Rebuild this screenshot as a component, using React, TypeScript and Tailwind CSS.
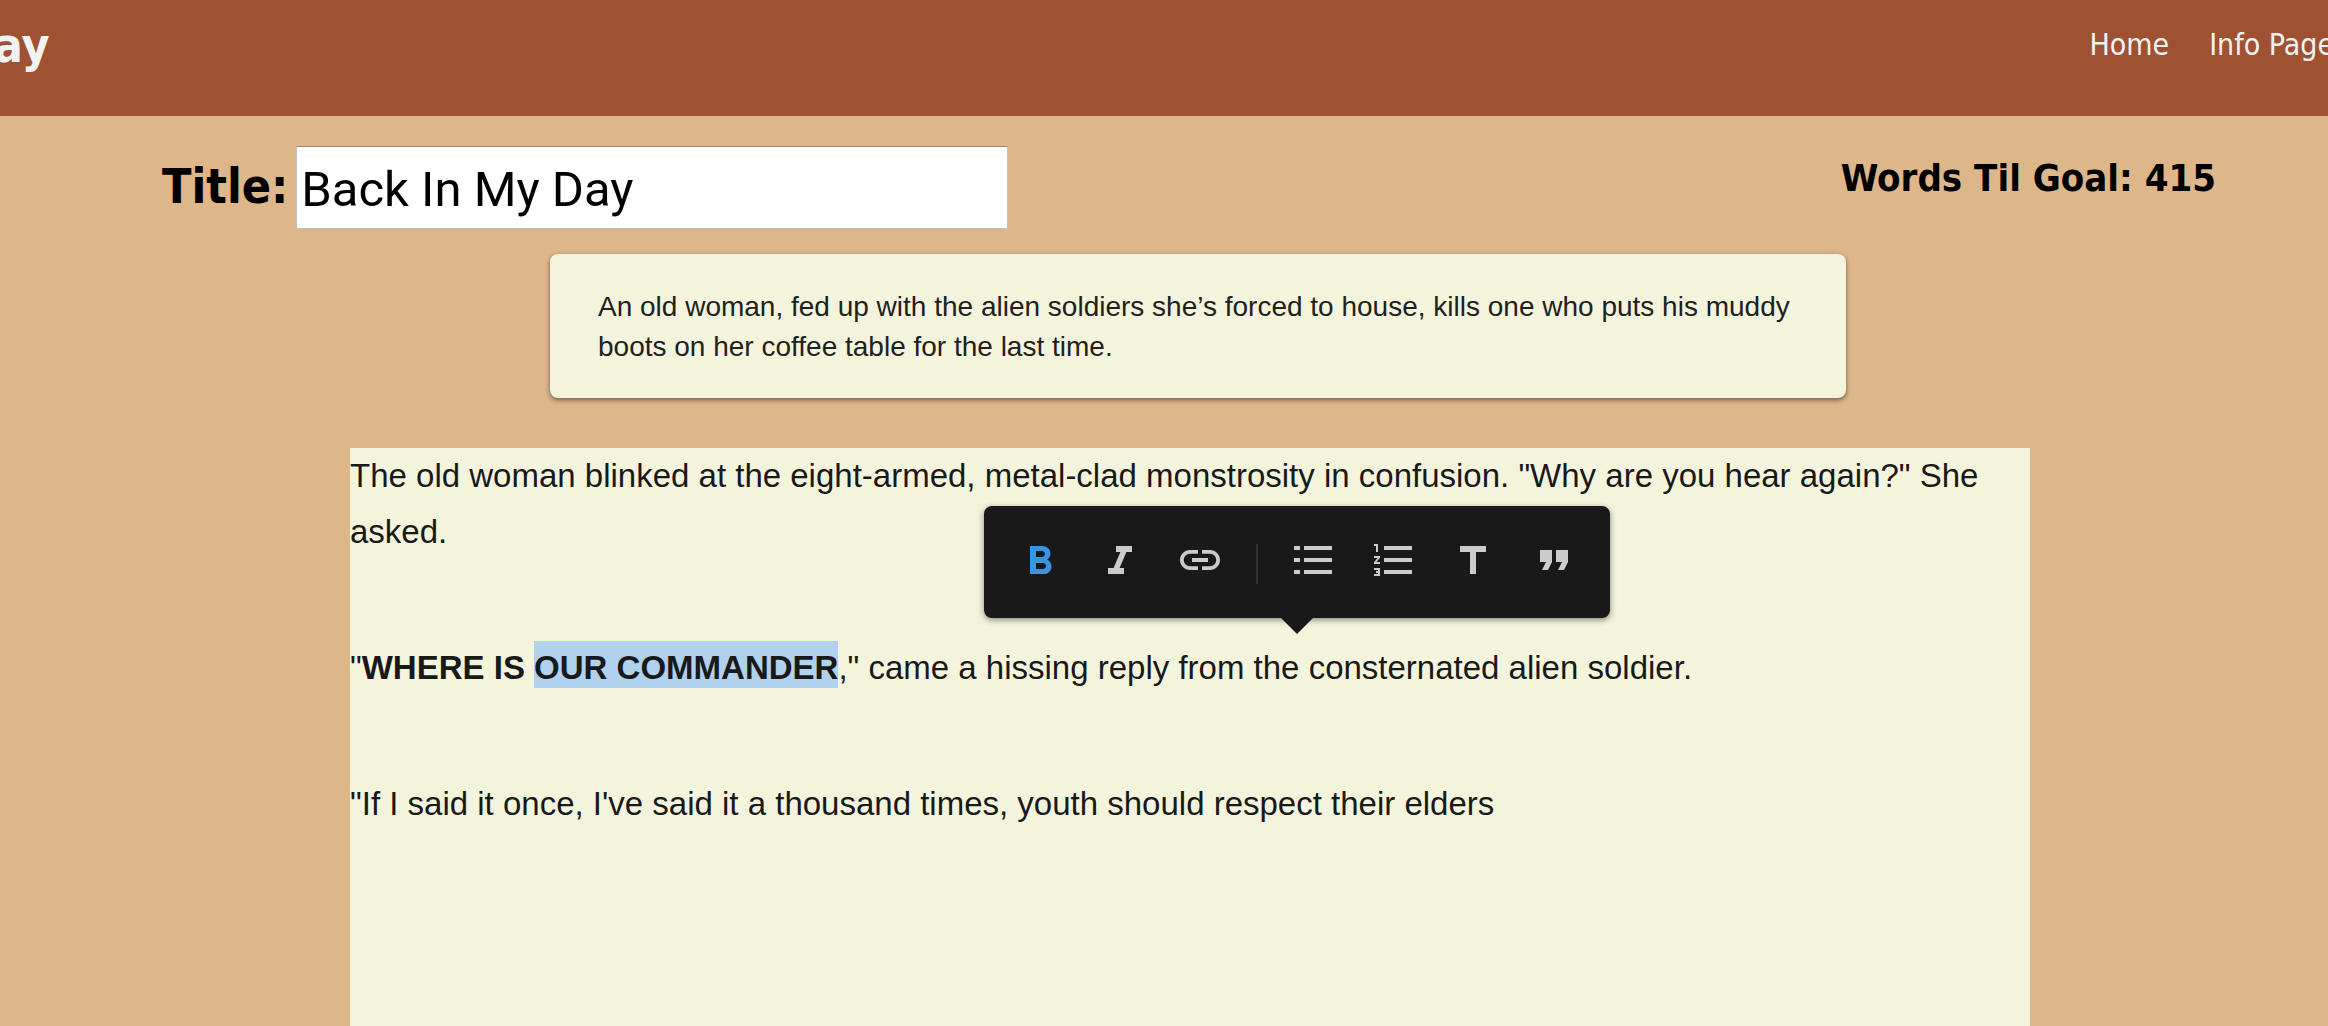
import { useState } from 'react';
import type { ReactNode } from 'react';

type Tool = { label: string; active?: boolean; icon: ReactNode };

const inlineTools: Tool[] = [
  {
    label: 'Bold',
    active: true,
    icon: (
      <path d="M15.6 11.79c.97-.67 1.65-1.77 1.65-2.79 0-2.26-1.75-4-4-4H7v14h7.04c2.09 0 3.71-1.7 3.71-3.79 0-1.52-.86-2.82-2.15-3.42zM10 7.5h3c.83 0 1.5.67 1.5 1.5s-.67 1.5-1.5 1.5h-3v-3zm3.5 9H10v-3h3.5c.83 0 1.5.67 1.5 1.5s-.67 1.5-1.5 1.5z" />
    ),
  },
  { label: 'Italic', icon: <path d="M10 5v3h2.21l-3.42 8H6v3h8v-3h-2.21l3.42-8H18V5z" /> },
  {
    label: 'Link',
    icon: (
      <path d="M3.9 12c0-1.71 1.39-3.1 3.1-3.1h4V7H7c-2.76 0-5 2.24-5 5s2.24 5 5 5h4v-1.9H7c-1.71 0-3.1-1.39-3.1-3.1zM8 13h8v-2H8v2zm9-6h-4v1.9h4c1.71 0 3.1 1.39 3.1 3.1s-1.39 3.1-3.1 3.1h-4V17h4c2.76 0 5-2.24 5-5s-2.24-5-5-5z" />
    ),
  },
];

const blockTools: Tool[] = [
  {
    label: 'Bulleted list',
    icon: <path d="M2 5h3v2H2zM2 11h3v2H2zM2 17h3v2H2zM7 5h14v2H7zM7 11h14v2H7zM7 17h14v2H7z" />,
  },
  {
    label: 'Numbered list',
    icon: (
      <path d="M2 17h2v.5H3v1h1v.5H2v1h3v-4H2v1zm1-9h1V4H2v1h1v3zm-1 3h1.8L2 13.1v.9h3v-1H3.2L5 10.9V10H2v1zm5-6v2h14V5H7zm0 14h14v-2H7v2zm0-6h14v-2H7v2z" />
    ),
  },
  { label: 'Heading', icon: <path d="M5 5v3h5v11h3V8h5V5z" /> },
  { label: 'Quote', icon: <path d="M6 17h3l2-4V7H5v6h3zm8 0h3l2-4V7h-6v6h3z" /> },
];

function ToolButton({ label, active, icon }: Tool) {
  return (
    <button
      type="button"
      aria-label={label}
      aria-pressed={!!active}
      className={active ? 'text-[#3895e6]' : 'text-[#cccccc]'}
    >
      <svg viewBox="0 0 24 24" fill="currentColor" className="size-12" aria-hidden="true">
        {icon}
      </svg>
    </button>
  );
}

function Toolbar() {
  return (
    <div
      role="toolbar"
      aria-label="Formatting"
      className="absolute left-[634px] top-[58px] flex items-end gap-8 rounded-lg bg-[#191919] px-8 pt-[30px] pb-[34px] shadow-[0_2px_6px_rgba(0,0,0,0.45)]"
    >
      {inlineTools.map((t) => (
        <ToolButton key={t.label} {...t} />
      ))}
      <div className="h-10 w-0.5 bg-[#333333]" />
      {blockTools.map((t) => (
        <ToolButton key={t.label} {...t} />
      ))}
      <div className="absolute left-1/2 top-full size-0 -translate-x-1/2 border-x-16 border-t-16 border-x-transparent border-t-[#191919]" />
    </div>
  );
}

export default function App() {
  const [title, setTitle] = useState('Back In My Day');
  return (
    <div className="flex min-h-screen flex-col overflow-hidden bg-[#ddb68a] font-['DejaVu_Sans_Condensed','Noto_Sans',sans-serif] text-black">
      <header className="flex h-29 items-start justify-between bg-[#9e5232] text-[#f2f2f2]">
        <a href="#" className="-ml-[42px] pt-3 text-5xl leading-[66px] font-bold">
          Day
        </a>
        <nav className="-mr-1.5 flex gap-10 pt-6 text-[30px] leading-[42px] whitespace-nowrap">
          <a href="#home">Home</a>
          <a href="#info">Info Page</a>
        </nav>
      </header>

      <div className="flex items-start justify-between pt-[30px] pr-28 pl-[162px]">
        <div className="flex items-start gap-2">
          <label htmlFor="title" className="pt-1 text-5xl leading-[72px] font-bold">
            Title:
          </label>
          <input
            id="title"
            value={title}
            onChange={(e) => setTitle(e.target.value)}
            className="h-[83px] w-[712px] border border-[#c0c0c0] border-t-[#a98963] bg-white px-1 pt-1 font-['Roboto',sans-serif] text-[49px] outline-none"
          />
        </div>
        <h3 className="pt-1.5 text-[38px] leading-[52px] font-bold">Words Til Goal: 415</h3>
      </div>

      <section className="mt-[25px] mr-[482px] ml-[550px] rounded-lg bg-[#f4f4dd] px-12 pt-[33px] pb-[31px] font-['Liberation_Sans',sans-serif] text-[28px] leading-10 text-[#212121] shadow-[0_2px_5px_rgba(0,0,0,0.5)]">
        <p>
          An old woman, fed up with the alien soldiers she’s forced to house, kills one who puts his muddy boots on her
          coffee table for the last time.
        </p>
      </section>

      <main className="relative mt-[50px] mr-[298px] ml-[350px] flex-1 bg-[#f4f4dd] font-['Liberation_Sans',sans-serif] text-[33px] leading-14 text-[#191919]">
        <div className="flex flex-col gap-20">
          <p>
            The old woman blinked at the eight-armed, metal-clad monstrosity in confusion. "Why are you hear again?" She
            asked.
          </p>
          <p>
            "
            <strong>
              WHERE IS <mark className="bg-[#b0d2ee] pt-2 pb-0.5 text-inherit">OUR COMMANDER</mark>
            </strong>
            ," came a hissing reply from the consternated alien soldier.
          </p>
          <p>"If I said it once, I've said it a thousand times, youth should respect their elders</p>
        </div>
        <Toolbar />
      </main>
    </div>
  );
}
